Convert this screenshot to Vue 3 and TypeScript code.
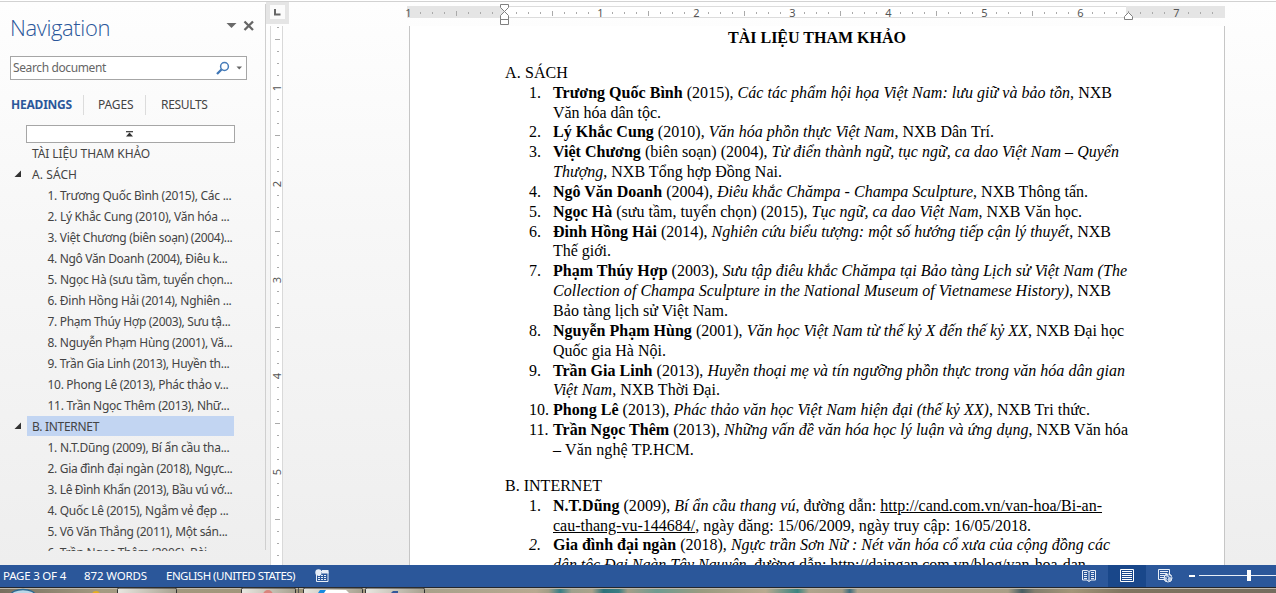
<script setup lang="ts">
import type { Directive } from 'vue'

interface Run { t: string; k?: 'b' | 'i' | 'u' }
interface Line { w: number; n?: string; ni?: boolean; runs: Run[] }
interface NavRow { t: string; w: number; level: 0 | 1; arrow?: boolean; active?: boolean }

// Spreads a text run over the requested width by adjusting its tracking.
const vFit: Directive<HTMLElement, number> = {
  mounted(el, { value }) {
    const natural = el.getBoundingClientRect().width
    const count = Array.from(el.textContent ?? '').length
    if (natural && count) el.style.letterSpacing = `${(value - natural) / count}px`
  },
}

const nav: NavRow[] = [
  { t: 'TÀI LIỆU THAM KHẢO', w: 118, level: 0 },
  { t: 'A. SÁCH', w: 45, level: 0, arrow: true },
  { t: '1. Trương Quốc Bình (2015), Các ...', w: 184, level: 1 },
  { t: '2. Lý Khắc Cung (2010), Văn hóa ...', w: 182, level: 1 },
  { t: '3. Việt Chương (biên soạn) (2004)...', w: 185, level: 1 },
  { t: '4. Ngô Văn Doanh (2004), Điêu k...', w: 180, level: 1 },
  { t: '5. Ngọc Hà (sưu tầm, tuyển chọn...', w: 185, level: 1 },
  { t: '6. Đinh Hồng Hải (2014), Nghiên ...', w: 184, level: 1 },
  { t: '7. Phạm Thúy Hợp (2003), Sưu tậ...', w: 183, level: 1 },
  { t: '8. Nguyễn Phạm Hùng (2001), Vă...', w: 185, level: 1 },
  { t: '9. Trần Gia Linh (2013), Huyền th...', w: 182, level: 1 },
  { t: '10. Phong Lê (2013), Phác thảo v...', w: 181, level: 1 },
  { t: '11. Trần Ngọc Thêm (2013), Nhữ...', w: 182, level: 1 },
  { t: 'B. INTERNET', w: 67, level: 0, arrow: true, active: true },
  { t: '1. N.T.Dũng (2009), Bí ẩn cầu tha...', w: 182, level: 1 },
  { t: '2. Gia đình đại ngàn (2018), Ngực...', w: 185, level: 1 },
  { t: '3. Lê Đình Khẩn (2013), Bầu vú vớ...', w: 185, level: 1 },
  { t: '4. Quốc Lê (2015), Ngắm vẻ đẹp ...', w: 181, level: 1 },
  { t: '5. Võ Văn Thắng (2011), Một sán...', w: 180, level: 1 },
  { t: '6. Trần Ngọc Thêm (2006), Bài ...', w: 171, level: 1 },
]

const books: Line[] = [
  { n: '1.', w: 559, runs: [{ t: 'Trương Quốc Bình', k: 'b' }, { t: ' (2015), ' }, { t: 'Các tác phẩm hội họa Việt Nam: lưu giữ và bảo tồn', k: 'i' }, { t: ', NXB' }] },
  { w: 108, runs: [{ t: 'Văn hóa dân tộc.' }] },
  { n: '2.', w: 441, runs: [{ t: 'Lý Khắc Cung', k: 'b' }, { t: ' (2010), ' }, { t: 'Văn hóa phồn thực Việt Nam', k: 'i' }, { t: ', NXB Dân Trí.' }] },
  { n: '3.', w: 566, runs: [{ t: 'Việt Chương', k: 'b' }, { t: ' (biên soạn) (2004), ' }, { t: 'Từ điển thành ngữ, tục ngữ, ca dao Việt Nam – Quyển', k: 'i' }] },
  { w: 229, runs: [{ t: 'Thượng', k: 'i' }, { t: ', NXB Tổng hợp Đồng Nai.' }] },
  { n: '4.', w: 535, runs: [{ t: 'Ngô Văn Doanh', k: 'b' }, { t: ' (2004), ' }, { t: 'Điêu khắc Chămpa - Champa Sculpture', k: 'i' }, { t: ', NXB Thông tấn.' }] },
  { n: '5.', w: 529, runs: [{ t: 'Ngọc Hà', k: 'b' }, { t: ' (sưu tầm, tuyển chọn) (2015), ' }, { t: 'Tục ngữ, ca dao Việt Nam', k: 'i' }, { t: ', NXB Văn học.' }] },
  { n: '6.', w: 558, runs: [{ t: 'Đinh Hồng Hải', k: 'b' }, { t: ' (2014), ' }, { t: 'Nghiên cứu biểu tượng: một số hướng tiếp cận lý thuyết', k: 'i' }, { t: ', NXB' }] },
  { w: 58, runs: [{ t: 'Thế giới.' }] },
  { n: '7.', w: 574, runs: [{ t: 'Phạm Thúy Hợp', k: 'b' }, { t: ' (2003), ' }, { t: 'Sưu tập điêu khắc Chămpa tại Bảo tàng Lịch sử Việt Nam (The', k: 'i' }] },
  { w: 558, runs: [{ t: 'Collection of Champa Sculpture in the National Museum of Vietnamese History)', k: 'i' }, { t: ', NXB' }] },
  { w: 175, runs: [{ t: 'Bảo tàng lịch sử Việt Nam.' }] },
  { n: '8.', w: 571, runs: [{ t: 'Nguyễn Phạm Hùng', k: 'b' }, { t: ' (2001), ' }, { t: 'Văn học Việt Nam từ thế kỷ X đến thế kỷ XX', k: 'i' }, { t: ', NXB Đại học' }] },
  { w: 113, runs: [{ t: 'Quốc gia Hà Nội.' }] },
  { n: '9.', w: 572, runs: [{ t: 'Trần Gia Linh', k: 'b' }, { t: ' (2013), ' }, { t: 'Huyền thoại mẹ và tín ngưỡng phồn thực trong văn hóa dân gian', k: 'i' }] },
  { w: 167, runs: [{ t: 'Việt Nam', k: 'i' }, { t: ', NXB Thời Đại.' }] },
  { n: '10.', w: 537, runs: [{ t: 'Phong Lê', k: 'b' }, { t: ' (2013), ' }, { t: 'Phác thảo văn học Việt Nam hiện đại (thế kỷ XX)', k: 'i' }, { t: ', NXB Tri thức.' }] },
  { n: '11.', w: 575, runs: [{ t: 'Trần Ngọc Thêm', k: 'b' }, { t: ' (2013), ' }, { t: 'Những vấn đề văn hóa học lý luận và ứng dụng', k: 'i' }, { t: ', NXB Văn hóa' }] },
  { w: 141, runs: [{ t: '– Văn nghệ TP.HCM.' }] },
]

const web: Line[] = [
  { n: '1.', w: 549, runs: [{ t: 'N.T.Dũng', k: 'b' }, { t: ' (2009), ' }, { t: 'Bí ẩn cầu thang vú', k: 'i' }, { t: ', đường dẫn: ' }, { t: 'http://cand.com.vn/van-hoa/Bi-an-', k: 'u' }] },
  { w: 478, runs: [{ t: 'cau-thang-vu-144684/', k: 'u' }, { t: ', ngày đăng: 15/06/2009, ngày truy cập: 16/05/2018.' }] },
  { n: '2.', ni: true, w: 557, runs: [{ t: 'Gia đình đại ngàn', k: 'b' }, { t: ' (2018), ' }, { t: 'Ngực trần Sơn Nữ : Nét văn hóa cổ xưa của cộng đồng các', k: 'i' }] },
  { w: 538, runs: [{ t: 'dân tộc Đại Ngàn Tây Nguyên', k: 'i' }, { t: ', đường dẫn: ' }, { t: 'http://daingan.com.vn/blog/van-hoa-dan-', k: 'u' }] },
]

const groups = [
  { title: 'A. SÁCH', w: 63, lines: books },
  { title: 'B. INTERNET', w: 97, lines: web },
]

// Eighth-inch ruler marks: 12px apart, label every 96px, taller mark halfway.
type Mark = { p: number; kind: 'dot' | 'half' | 'num'; label: string }
function marks(origin: number, from: number, to: number): Mark[] {
  const out: Mark[] = []
  for (let i = from; i <= to; i++) {
    if (i === 0 && origin > 0) continue
    const kind = i % 8 === 0 ? 'num' : i % 4 === 0 ? 'half' : 'dot'
    out.push({ p: origin + i * 12, kind, label: String(Math.abs(i / 8)) })
  }
  return out
}
const hMarks = marks(97, -8, 59)
const vMarks = marks(-35, 3, 47)
</script>

<template>
  <div class="word">
    <div class="work">
      <aside class="nav">
        <header class="nav-head">
          <h1><span v-fit="100">Navigation</span></h1>
          <svg class="head-icons" width="30" height="14" viewBox="0 0 30 14">
            <path d="M1.500 5h10L6.500 10z" fill="#6a6a6a" />
            <path d="M19.500 3.500l8.500 8.500M28 3.500L19.500 12" stroke="#666" stroke-width="2.300" />
          </svg>
        </header>
        <div class="search">
          <span v-fit="93">Search document</span>
          <svg width="32" height="18" viewBox="0 0 32 18">
            <circle cx="10.500" cy="7.500" r="3.900" fill="#fff" stroke="#477cb9" stroke-width="1.500" />
            <path d="M7.500 10.500L3 15" stroke="#3f76b6" stroke-width="2.300" />
            <path d="M22.500 7.500h5.500l-2.750 3z" fill="#666" />
          </svg>
        </div>
        <div class="tabs">
          <b><span v-fit="61">HEADINGS</span></b>
          <span class="tab"><span v-fit="35.500">PAGES</span></span>
          <span class="tab last"><span v-fit="46.500">RESULTS</span></span>
        </div>
        <div class="jump">
          <svg width="9" height="7" viewBox="0 0 9 7"><path d="M1 .7h7" stroke="#333" stroke-width="1.200" /><path d="M4.500 1.500L8 5.500H1z" fill="#333" /></svg>
        </div>
        <div class="tree">
          <div v-for="r in nav" :key="r.t" class="row" :class="{ child: r.level, active: r.active }">
            <svg class="arrow" width="8" height="8" viewBox="0 0 8 8"><path v-if="r.arrow" d="M7 .5V7H.5z" fill="#333" /></svg>
            <span class="label"><span v-fit="r.w">{{ r.t }}</span></span>
          </div>
        </div>
      </aside>

      <div class="vstrip">
        <div class="corner"><i><svg width="7" height="7" viewBox="0 0 7 7"><path d="M1 0v5.500h5.500" fill="none" stroke="#666" stroke-width="2" /></svg></i></div>
        <svg class="vruler" width="13" height="539" viewBox="0 0 13 539">
          <rect width="13" height="539" fill="#fff" />
          <path d="M.5 0V539M12.500 0V539" stroke="#d9d9d9" />
          <template v-for="m in vMarks" :key="m.p">
            <text v-if="m.kind === 'num'" :transform="`translate(11 ${m.p + 1}) rotate(-90)`" text-anchor="middle">{{ m.label }}</text>
            <rect v-else :x="m.kind === 'half' ? 5 : 7" :y="m.p" :width="m.kind === 'half' ? 5 : 2" height="1" fill="#aaa" />
          </template>
        </svg>
      </div>

      <main class="canvas">
        <svg class="hruler" width="820" height="24" viewBox="0 0 820 24">
          <rect y="4" width="818" height="12" fill="#e5e5e5" />
          <rect x="97" y="4" width="622" height="12" fill="#fff" />
          <path d="M97 4.500H719M97 15.500H719" stroke="#dcdcdc" />
          <template v-for="m in hMarks" :key="m.p">
            <text v-if="m.kind === 'num'" :x="m.p + .5" y="14.500" text-anchor="middle">{{ m.label }}</text>
            <rect v-else :x="m.p" :y="m.kind === 'half' ? 9 : 10" width="1" :height="m.kind === 'half' ? 5 : 2" fill="#aaa" />
          </template>
          <g fill="#fff" stroke="#808080">
            <path d="M93.500 2.500h8v3l-4 4 4 4v7h-8v-7l4-4-4-4z" />
            <path d="M93.500 17.500h8v5h-8z" />
            <path d="M717.500 17.500v-3l4-4 4 4v3z" />
          </g>
        </svg>
        <article class="page">
          <h2><span v-fit="178">TÀI LIỆU THAM KHẢO</span></h2>
          <section v-for="g in groups" :key="g.title">
            <h3><span v-fit="g.w">{{ g.title }}</span></h3>
            <div v-for="(l, i) in g.lines" :key="i" class="line">
              <span class="num" :class="{ i: l.ni }">{{ l.n }}</span>
              <span v-fit="l.w" class="text"><span v-for="(r, j) in l.runs" :key="j" :class="r.k">{{ r.t }}</span></span>
            </div>
          </section>
        </article>
      </main>
    </div>

    <footer class="status">
      <span class="s1"><span v-fit="63">PAGE 3 OF 4</span></span>
      <span class="s2"><span v-fit="63">872 WORDS</span></span>
      <span class="s3"><span v-fit="129">ENGLISH (UNITED STATES)</span></span>
      <svg class="macro" width="14" height="14" viewBox="0 0 14 14">
        <path d="M6 2.500h7v10H1.500V6" fill="none" stroke="#e8eef7" />
        <path d="M7 1h6.500v3.500H7z" fill="#e8eef7" />
        <path d="M3 6.500h9M3 8.500h9M3 10.500h9" stroke="#e8eef7" stroke-dasharray="2 1" />
        <circle cx="3.500" cy="3.500" r="3.200" fill="#e8eef7" />
      </svg>
      <div class="views">
        <svg width="14" height="14" viewBox="0 0 14 14" fill="none" stroke="#e8eef7">
          <path d="M.5 1.500h4.500l2 1 2-1h4.500v9.500H9l-2 1.500-2-1.500H.5zM7 2.500v10M2 3.500h3M2 5.500h3M2 7.500h3M2 9.500h3M9 3.500h3M9 5.500h3M9 7.500h3M9 9.500h3" />
        </svg>
        <span class="sel">
          <svg width="14" height="13" viewBox="0 0 14 13" fill="none" stroke="#fff"><path d="M.5.5h13v12H.5zM2 2.500h10M2 4.500h10M2 6.500h10M2 8.500h10M2 10.500h10" /></svg>
        </span>
        <svg class="webv" width="15" height="14" viewBox="0 0 15 14" fill="none" stroke="#e8eef7">
          <path d="M6 10.500H.5v-10h11V5M2 2.500h8M2 4.500h7M2 6.500h5M2 8.500h4" />
          <circle cx="10" cy="9" r="4" fill="#bccde6" />
          <path d="M7 7.500l3 1-1 2 1 2M10.500 5.500l1 2 2 .5" stroke="#2b579a" />
        </svg>
      </div>
      <svg class="zoom" width="88" height="12" viewBox="0 0 88 12"><path d="M1 5h6v2H1z" fill="#fff" /><path d="M11 5.500H88" stroke="#e8eef7" /><path d="M59 0h4v11h-4z" fill="#fff" /></svg>
    </footer>

    <svg class="taskbar" width="1276" height="6" viewBox="0 0 1276 6">
      <defs>
        <linearGradient id="wood">
          <stop offset="0" stop-color="#776f5f" /><stop offset=".08" stop-color="#a59b82" /><stop offset=".25" stop-color="#9f9477" />
          <stop offset=".34" stop-color="#a9a28b" /><stop offset=".42" stop-color="#b8a991" /><stop offset=".43" stop-color="#a39e87" />
          <stop offset=".439" stop-color="#387f86" /><stop offset=".448" stop-color="#9fa18d" /><stop offset=".464" stop-color="#aaa38b" />
          <stop offset=".473" stop-color="#2e737a" /><stop offset=".485" stop-color="#3a7e83" /><stop offset=".492" stop-color="#a49e88" />
          <stop offset=".515" stop-color="#6f9b90" /><stop offset=".55" stop-color="#9a9b80" /><stop offset=".6" stop-color="#b9aa90" />
          <stop offset=".625" stop-color="#3c8580" /><stop offset=".634" stop-color="#afa48c" /><stop offset=".66" stop-color="#a69e88" />
          <stop offset=".666" stop-color="#416d7d" /><stop offset=".672" stop-color="#b2a68e" /><stop offset=".79" stop-color="#aa9f87" />
          <stop offset=".801" stop-color="#485e63" /><stop offset=".811" stop-color="#847f6e" /><stop offset=".84" stop-color="#a49679" />
          <stop offset=".88" stop-color="#807560" /><stop offset="1" stop-color="#756c5e" />
        </linearGradient>
        <linearGradient id="btn"><stop offset="0" stop-color="#e9e7e1" /><stop offset="1" stop-color="#a7a18f" /></linearGradient>
      </defs>
      <rect width="1276" height="6" fill="url(#wood)" />
      <path d="M0 .5H1276" stroke="#24262c" />
      <path d="M0 1.500H1276" stroke="#bdb7aa" />
      <ellipse cx="23" cy="8" rx="12" ry="5.500" fill="#b9d8e8" stroke="#2e6890" stroke-width="1.500" />
      <circle cx="96" cy="8" r="4" fill="#e4ae21" />
      <g fill="url(#btn)" stroke="#333">
        <rect x="117.500" y="1" width="59" height="12" rx="1.500" /><rect x="241.500" y="1" width="54" height="12" rx="1.500" />
        <rect x="303.500" y="1" width="59" height="12" rx="1.500" /><rect x="365.500" y="1" width="59" height="12" rx="1.500" />
      </g>
      <path d="M298.500 1v5" stroke="#555" />
      <circle cx="268" cy="8" r="5" fill="#d9847c" />
      <path d="M318 6l2-3h7l-2 3z" fill="#168be0" /><path d="M324 6l2-3h20l3 3z" fill="#fff" />
      <path d="M391 6l2-2h5v2z" fill="#34599a" />
    </svg>
  </div>
</template>

<style>
body { margin: 0; overflow: hidden; }
</style>

<style scoped>
.word { width: 1276px; height: 593px; display: flex; flex-direction: column; font: 12px "Noto Sans", "Open Sans", sans-serif; color: #444; overflow: hidden; }
.work { height: 564px; flex: none; box-sizing: border-box; border-top: 1px solid #d2d2d2; margin-top: 1px; display: flex; background: linear-gradient(#fefefe, #f7f7f7 40%, #eeeeee); overflow: hidden; }
.nav { width: 265px; height: 546px; margin-top: 2px; border-right: 1px solid #cfcfcf; flex: none; }
.nav-head { display: flex; justify-content: space-between; height: 52px; padding: 0 10px 0 10px; }
h1 { margin: 8px 0 0; font: 300 22px/30px "Open Sans", sans-serif; color: #2b579a; white-space: nowrap; }
.head-icons { margin: 14px 0 0; }
.search { width: 235px; height: 22px; margin-left: 10px; border: 1px solid #a6a6a6; background: #fff; display: flex; align-items: center; justify-content: space-between; color: #666; white-space: nowrap; }
.search > span { margin: 0 0 1px 2px; }
.tabs { display: flex; margin: 15px 0 0 11px; height: 20px; line-height: 20px; white-space: nowrap; }
.tabs b { width: 72px; color: #2b579a; }
.tab { border-left: 1px solid #dcdcdc; width: 47px; padding-left: 14px; }
.tab.last { padding-left: 15px; }
.jump { width: 207px; height: 16px; margin: 10px 0 0 26px; border: 1px solid #a6a6a6; background: #fff; display: flex; align-items: center; justify-content: center; }
.jump svg { margin-right: 2px; }
.tree { height: 408px; overflow: hidden; }
.row { display: flex; height: 21px; line-height: 21px; white-space: nowrap; }
.arrow { margin: 6px 5px 0 14px; flex: none; }
.label { width: 202px; padding-left: 5px; height: 20px; }
.child .label { width: 186.500px; padding-left: 20.500px; }
.active .label { background: #c2d5f2; }
.vstrip { width: 22px; flex: none; }
.corner { width: 23px; height: 22px; box-sizing: border-box; background: #e5e5e5; padding: 3px 0 0 4px; }
.corner i { display: flex; width: 15px; height: 14px; background: #fbfbfb; align-items: center; justify-content: center; }
.vruler { display: block; margin: 2px 0 0 4px; }
.vruler text, .hruler text { font: 11px "Noto Sans", sans-serif; fill: #555; }
.canvas { flex: 1; padding-left: 119px; }
.hruler { display: block; overflow: visible; }
.page { width: 814px; height: 540px; margin-left: 2px; border: solid #c6c6c6; border-width: 0 1px; background: #fff; font: 16px/19.85px "Liberation Serif", serif; color: #000; white-space: nowrap; }
h2 { margin: 0; padding: 2px 0 0; font-size: 16px; line-height: 20px; text-align: center; }
h3 { margin: 14.700px 0 0 95px; font-size: 16px; font-weight: 400; line-height: 20px; }
section + section h3 { margin-top: 16px; }
.line { display: flex; height: 19.85px; margin-left: 119px; }
.num { width: 24px; flex: none; }
.b { font-weight: 700; }
.i { font-style: italic; }
.u { text-decoration: underline; }
.text { white-space: pre; }
.status { height: 22px; flex: none; background: #2b579a; color: #fff; display: flex; align-items: center; white-space: nowrap; font-size: 11.500px; }
.s1, .s2, .s3 { padding-bottom: 1px; }
.s1 { width: 81px; padding-left: 3px; }
.s2 { width: 82px; }
.s3 { width: 149px; }
.views { display: flex; align-items: center; margin-left: auto; }
.sel { width: 38px; height: 22px; margin: 0 12px; background: #19478a; display: flex; align-items: center; justify-content: center; }
.views > svg, .sel svg { margin-bottom: 1px; }
.zoom { margin-left: 15px; }
.taskbar { display: block; flex: none; }
</style>
